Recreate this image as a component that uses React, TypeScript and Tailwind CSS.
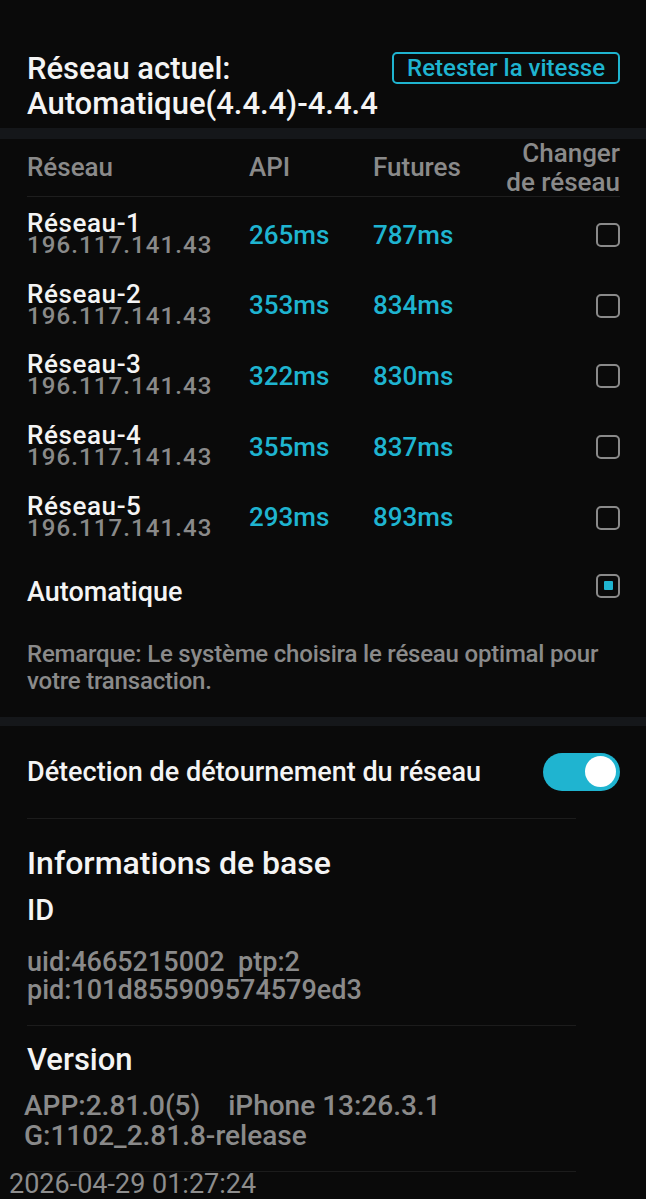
const networks = [
  { name: "Réseau-1", ip: "196.117.141.43", api: "265ms", fut: "787ms" },
  { name: "Réseau-2", ip: "196.117.141.43", api: "353ms", fut: "834ms" },
  { name: "Réseau-3", ip: "196.117.141.43", api: "322ms", fut: "830ms" },
  { name: "Réseau-4", ip: "196.117.141.43", api: "355ms", fut: "837ms" },
  { name: "Réseau-5", ip: "196.117.141.43", api: "293ms", fut: "893ms" },
];

function Checkbox({ checked }: { checked?: boolean }) {
  return (
    <div className="w-[24px] h-[24px] rounded-[5px] border-2 border-[#8a8a8a] flex items-center justify-center">
      {checked && <div className="w-[9px] h-[9px] rounded-[1px] bg-[#1fb4d0]" />}
    </div>
  );
}

export default function App() {
  return (
    <div
      className="w-[646px] h-[1199px] overflow-hidden bg-[#0a0a0a] text-[#f4f4f4]"
      style={{ fontFamily: "Roboto, 'Noto Sans', sans-serif" }}
    >
      {/* current network */}
      <div className="h-[128px] pl-[27px] pr-[26px] pt-[52px] flex justify-between">
        <div className="text-[31px] font-medium leading-[35px] -mt-[1px]">
          <div>Réseau actuel:</div>
          <div>Automatique(4.4.4)-4.4.4</div>
        </div>
        <div className="h-[32px] px-[13px] border-2 border-[#1fb4d0] rounded-[5px] text-[#1fb4d0] text-[24px] font-medium flex items-center">
          Retester la vitesse
        </div>
      </div>
      <div className="h-[11px] bg-[#15171a]" />

      {/* table */}
      <div className="pl-[27px] pr-[26px]">
        <div className="flex items-center h-[58px] border-b border-[#1e1e1e] text-[#8a8a8a] text-[26px] font-medium">
          <div className="w-[222px]">Réseau</div>
          <div className="w-[124px]">API</div>
          <div className="w-[110px]">Futures</div>
          <div className="flex-1 text-right leading-[29px]">
            Changer
            <br />
            de réseau
          </div>
        </div>
        <div className="pt-[3px]">
          {networks.map((n) => (
            <div key={n.name} className="flex items-center h-[70.6px]">
              <div className="w-[222px] flex flex-col">
                <span className="text-[26px] font-medium leading-[21px] tracking-[0.6px]">{n.name}</span>
                <span className="text-[24px] font-medium leading-[23px] text-[#8a8a8a] tracking-[1.1px]">{n.ip}</span>
              </div>
              <div className="w-[124px] text-[26px] font-medium text-[#1fb4d0]">{n.api}</div>
              <div className="w-[110px] text-[26px] font-medium text-[#1fb4d0]">{n.fut}</div>
              <div className="flex-1 flex justify-end">
                <Checkbox />
              </div>
            </div>
          ))}
        </div>
        <div className="flex items-center justify-between h-[78px]">
          <span className="text-[27px] font-medium">Automatique</span>
          <div className="-mt-[12px]">
            <Checkbox checked />
          </div>
        </div>
        <p className="text-[#8a8a8a] text-[24px] font-medium leading-[27px] pt-[10px] pb-[22px] tracking-[-0.2px] -mr-[6px]">
          Remarque: Le système choisira le réseau optimal pour votre transaction.
        </p>
      </div>
      <div className="h-[9px] bg-[#15171a]" />

      {/* hijack detection */}
      <div className="pl-[27px] pr-[26px]">
        <div className="flex items-center justify-between h-[92px]">
          <span className="text-[27px] font-medium">Détection de détournement du réseau</span>
          <div className="w-[77px] h-[38px] rounded-full bg-[#1fb4d0] flex items-center justify-end px-[4px]">
            <div className="w-[31px] h-[31px] rounded-full bg-white" />
          </div>
        </div>
        <div className="h-px bg-[#1c1c1c] mr-[44px]" />

        <div className="pt-[26px]">
          <div className="text-[32px] font-medium leading-[36px]">Informations de base</div>
          <div className="text-[29px] font-medium leading-[30px] mt-[14px]">ID</div>
          <div className="text-[#8a8a8a] text-[27px] font-medium leading-[28px] mt-[23px]">
            <div>uid:4665215002&nbsp; ptp:2</div>
            <div>pid:101d855909574579ed3</div>
          </div>
        </div>
        <div className="h-px bg-[#1c1c1c] mr-[44px] mt-[21px]" />

        <div className="text-[31px] font-medium leading-[34px] mt-[17px]">Version</div>
        <div className="text-[#8a8a8a] text-[28px] font-medium leading-[30px] mt-[14px] -ml-[3px]">
          <div>APP:2.81.0(5)&nbsp;&nbsp;&nbsp; iPhone 13:26.3.1</div>
          <div>G:1102_2.81.8-release</div>
        </div>
        <div className="h-px bg-[#1c1c1c] mr-[44px] mt-[20px]" />
      </div>
      <div className="pl-[9px] text-[#8d8d8d] text-[27px] leading-[24px]">
        2026-04-29 01:27:24
      </div>
    </div>
  );
}
